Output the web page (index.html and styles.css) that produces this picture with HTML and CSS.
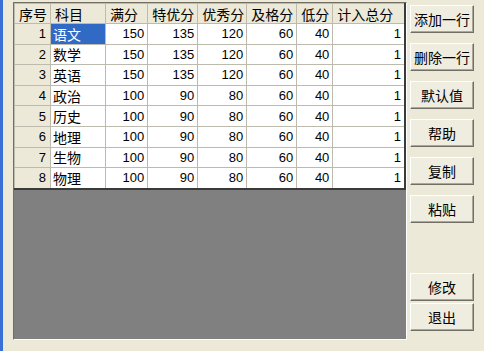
FILE: index.html
```html
<!DOCTYPE html>
<html lang="zh-CN">
<head>
<meta charset="utf-8">
<title>科目设置</title>
<link rel="stylesheet" href="styles.css">
</head>
<body>
<div class="window">
  <div class="grid-frame">
    <table class="grid">
      <colgroup>
        <col class="c-no"><col class="c-subj"><col class="c-full"><col class="c-top"><col class="c-good"><col class="c-pass"><col class="c-low"><col class="c-total">
      </colgroup>
      <thead>
        <tr><th>序号</th><th>科目</th><th>满分</th><th>特优分</th><th>优秀分</th><th>及格分</th><th>低分</th><th>计入总分</th></tr>
      </thead>
      <tbody>
        <tr><th>1</th><td class="txt sel">语文</td><td>150</td><td>135</td><td>120</td><td>60</td><td>40</td><td>1</td></tr>
        <tr><th>2</th><td class="txt">数学</td><td>150</td><td>135</td><td>120</td><td>60</td><td>40</td><td>1</td></tr>
        <tr><th>3</th><td class="txt">英语</td><td>150</td><td>135</td><td>120</td><td>60</td><td>40</td><td>1</td></tr>
        <tr><th>4</th><td class="txt">政治</td><td>100</td><td>90</td><td>80</td><td>60</td><td>40</td><td>1</td></tr>
        <tr><th>5</th><td class="txt">历史</td><td>100</td><td>90</td><td>80</td><td>60</td><td>40</td><td>1</td></tr>
        <tr><th>6</th><td class="txt">地理</td><td>100</td><td>90</td><td>80</td><td>60</td><td>40</td><td>1</td></tr>
        <tr><th>7</th><td class="txt">生物</td><td>100</td><td>90</td><td>80</td><td>60</td><td>40</td><td>1</td></tr>
        <tr><th>8</th><td class="txt">物理</td><td>100</td><td>90</td><td>80</td><td>60</td><td>40</td><td>1</td></tr>
      </tbody>
    </table>
  </div>
  <div class="buttons">
    <button class="btn">添加一行</button>
    <button class="btn">删除一行</button>
    <button class="btn">默认值</button>
    <button class="btn">帮助</button>
    <button class="btn">复制</button>
    <button class="btn">粘贴</button>
    <button class="btn btn-edit">修改</button>
    <button class="btn btn-exit">退出</button>
  </div>
</div>
</body>
</html>
```

FILE: styles.css
```css
html, body {
  margin: 0;
  padding: 0;
  background: #ece9d8;
}

.window {
  display: flex;
  align-items: flex-start;
  width: 484px;
  height: 351px;
  box-sizing: border-box;
  padding: 2px 0 0 10px;
  border-left: 3px solid #3a6fd8;
  background: #ece9d8;
  font-family: "Noto Sans CJK SC", "Liberation Sans", sans-serif;
}

.grid-frame {
  width: 394px;
  height: 338px;
  box-sizing: border-box;
  background: #808080;
  border: 1px solid;
  border-color: #716f64 #ffffff #ffffff #716f64;
}

.grid {
  border-collapse: collapse;
  table-layout: fixed;
  width: 392px;
  border-right: 2px solid #3a3a3a;
  border-bottom: 2px solid #3a3a3a;
  font-size: 14px;
  line-height: 1;
  color: #000;
}

.c-no { width: 36px; }
.c-subj { width: 55px; }
.c-full { width: 42px; }
.c-top { width: 50px; }
.c-good { width: 49px; }
.c-pass { width: 50px; }
.c-low { width: 36px; }
.c-total { width: 72px; }

.grid th,
.grid td {
  border: 1px solid #bdbaae;
  padding: 0 3px;
  white-space: nowrap;
  overflow: hidden;
}

.grid thead th {
  height: 19px;
  background: #ece9d8;
  font-weight: normal;
  text-align: left;
  padding-left: 4px;
  padding-right: 0;
  letter-spacing: 0;
}

.grid tbody th {
  background: #ece9d8;
  font-weight: normal;
  text-align: right;
  padding-right: 4px;
  font-family: "Liberation Sans", sans-serif;
  font-size: 13px;
}

.grid tbody td {
  height: 19.6px;
  background: #ffffff;
  text-align: right;
  font-family: "Liberation Sans", sans-serif;
  font-size: 13px;
}

.grid tbody td.txt {
  text-align: left;
  font-family: "Noto Sans CJK SC", sans-serif;
  font-size: 14px;
  padding-left: 2px;
}

.grid tbody td.sel {
  background: #316ac5;
  color: #ffffff;
}

.buttons {
  display: flex;
  flex-direction: column;
  gap: 10px;
  margin-left: 3px;
  padding-top: 3px;
  width: 64px;
}

.btn {
  width: 64px;
  height: 28px;
  box-sizing: border-box;
  margin: 0;
  padding: 0;
  background: #efece0;
  border: 1px solid;
  border-color: #ffffff #716f64 #716f64 #ffffff;
  box-shadow: inset -1px -1px 0 #aca899;
  font-family: "Noto Sans CJK SC", sans-serif;
  font-size: 14px;
  color: #000;
}

.btn-edit {
  margin-top: 40px;
}

.btn-exit {
  margin-top: -8px;
}
```
